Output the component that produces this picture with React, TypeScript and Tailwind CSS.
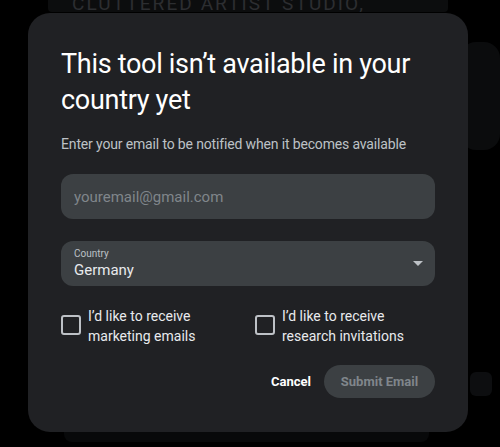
import { useState } from 'react';

function CheckOption({ label, checked, onChange }: { label: string; checked: boolean; onChange: () => void }) {
  return (
    <label className="flex items-start gap-[7px] cursor-pointer">
      <span
        onClick={onChange}
        className={`mt-[9px] h-[20px] w-[20px] shrink-0 rounded-[3px] border-2 ${checked ? 'border-[#8ab4f8] bg-[#8ab4f8]' : 'border-[#bdc1c6]'}`}
      />
      <span className="text-[14px] leading-[20px] text-[#e8eaed]">{label}</span>
    </label>
  );
}

export default function App() {
  const [marketing, setMarketing] = useState(false);
  const [research, setResearch] = useState(false);
  const [email, setEmail] = useState('');

  return (
    <div className="relative h-[447px] w-[500px] overflow-hidden bg-black" style={{ fontFamily: 'Roboto, "Noto Sans", sans-serif' }}>
      {/* page behind the dialog */}
      <div className="ml-[48px] h-[12px] w-[400px] overflow-hidden rounded-b-[4px] bg-[#0c0d0e]">
        <div className="-mt-[7px] pl-[24px] text-[19px] leading-[22px] tracking-[0.11em] text-[#2c2e31]">CLUTTERED ARTIST STUDIO,</div>
      </div>
      <div className="absolute left-[460px] top-[42px] h-[108px] w-[40px] rounded-[16px] bg-[#0b0c0d]" />
      <div className="absolute left-[470px] top-[372px] h-[24px] w-[22px] rounded-[6px] bg-[#0d0e10]" />
      <div className="absolute left-[64px] top-[420px] h-[22px] w-[365px] rounded-[8px] bg-[#08090a]" />

      {/* dialog */}
      <div className="absolute left-[28px] top-[13px] w-[440px] rounded-[22px] bg-[#202124] px-[33px] pb-[34px] pt-[33px]">
        <h1 className="text-[27px] font-normal leading-[36px] tracking-[-0.3px] text-white">
          This tool isn’t available in your country yet
        </h1>
        <p className="mt-[16px] text-[14px] leading-[20px] tracking-[-0.15px] text-[#bdc1c6]">
          Enter your email to be notified when it becomes available
        </p>

        <input
          value={email}
          onChange={(e) => setEmail(e.target.value)}
          placeholder="youremail@gmail.com"
          className="mt-[20px] block h-[45px] w-full rounded-[12px] bg-[#3c4043] px-[13px] text-[15px] text-[#e8eaed] outline-none placeholder:text-[#80868b]"
        />

        <div className="relative mt-[22px] flex h-[45px] w-full items-center rounded-[12px] bg-[#3c4043] px-[13px]">
          <div className="flex flex-col">
            <span className="text-[10px] leading-[12px] text-[#bdc1c6]">Country</span>
            <span className="text-[15px] leading-[20px] text-[#e8eaed]">Germany</span>
          </div>
          <svg className="absolute right-[12px] top-[20px]" width="10" height="5" viewBox="0 0 10 5">
            <path d="M0 0 L10 0 L5 5 Z" fill="#bdc1c6" />
          </svg>
        </div>

        <div className="mt-[20px] grid grid-cols-[194px_1fr]">
          <CheckOption label={'I’d like to receive marketing emails'} checked={marketing} onChange={() => setMarketing(!marketing)} />
          <CheckOption label={'I’d like to receive research invitations'} checked={research} onChange={() => setResearch(!research)} />
        </div>

        <div className="mt-[19px] flex items-center justify-end gap-[13px]">
          <button className="text-[13px] font-bold text-white">Cancel</button>
          <button disabled className="h-[33px] w-[111px] rounded-full bg-[#3c4043] text-[13px] font-bold text-[#80868b]">
            Submit Email
          </button>
        </div>
      </div>
    </div>
  );
}
